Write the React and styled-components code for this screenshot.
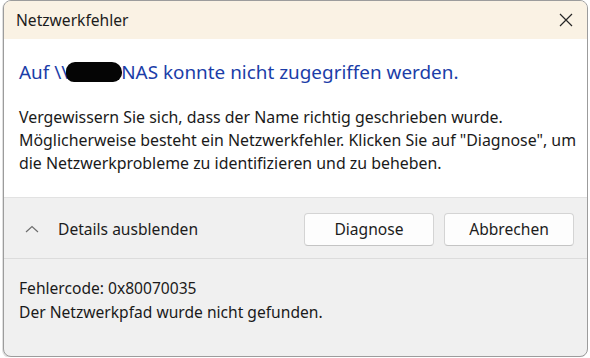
import React from "react";
import styled, { createGlobalStyle } from "styled-components";

const Global = createGlobalStyle`
  html, body {
    margin: 0;
    padding: 0;
    background: #ffffff;
  }
  body {
    font-family: "Segoe UI", "Noto Sans", "Open Sans", sans-serif;
  }
`;

const Dialog = styled.div`
  box-sizing: border-box;
  width: 585px;
  height: 357px;
  margin-left: 3px;
  display: flex;
  flex-direction: column;
  border: 1px solid #9c9c9c;
  border-radius: 8px;
  box-shadow: -1px 1px 0 0 rgba(0, 0, 0, 0.12);
  overflow: hidden;
  background: #f0f0f0;
`;

const TitleBar = styled.div`
  height: 37px;
  display: flex;
  align-items: center;
  justify-content: space-between;
  padding: 0 11px 1px 12px;
  background: #faf2e4;
`;

const Title = styled.div`
  color: #1c1c1c;
  font-size: 15.6px;
`;

const Close = styled.button`
  width: 20px;
  height: 20px;
  padding: 0;
  border: none;
  background: none;
  display: flex;
  align-items: center;
  justify-content: center;
`;

const Main = styled.div`
  height: 159px;
  box-sizing: border-box;
  background: #ffffff;
  padding: 17px 15px 0 15px;
  border-bottom: 1px solid #e2e2e2;
`;

const Heading = styled.div`
  color: #1b3da8;
  font-size: 18.9px;
  line-height: 32px;
  white-space: nowrap;
`;

const Redacted = styled.span`
  display: inline-block;
  width: 56px;
  height: 20px;
  margin: 0 -1px 0 -2px;
  vertical-align: -3px;
  background: #050505;
  border-radius: 9px 10px 9px 8px;
`;

const Body = styled.p`
  margin: 18px 0 0 0;
  color: #1a1a1a;
  font-size: 15.9px;
  line-height: 23px;
  white-space: nowrap;
`;

const Footer = styled.div`
  height: 61px;
  box-sizing: border-box;
  display: flex;
  align-items: center;
  padding: 2px 13px 0 20px;
  border-bottom: 1px solid #dcdcdc;
`;

const Toggle = styled.div`
  display: flex;
  align-items: center;
  gap: 18px;
  color: #1c1c1c;
  font-size: 15.6px;
  flex-grow: 1;
`;

const Buttons = styled.div`
  display: flex;
  gap: 10px;
`;

const Button = styled.button`
  width: 130px;
  height: 33px;
  box-sizing: border-box;
  background: #fdfdfd;
  border: 1px solid #d4d4d4;
  border-bottom-color: #c4c4c4;
  border-radius: 4px;
  color: #1c1c1c;
  font-family: inherit;
  font-size: 15.6px;
`;

const Details = styled.div`
  flex-grow: 1;
  padding: 17px 15px 0 15px;
  color: #1a1a1a;
  font-size: 15.6px;
  line-height: 24px;
`;

export default function App() {
  return (
    <>
      <Global />
      <Dialog>
        <TitleBar>
          <Title>Netzwerkfehler</Title>
          <Close aria-label="Schließen">
            <svg width="14" height="14" viewBox="0 0 14 14">
              <path d="M1 1L13 13M13 1L1 13" stroke="#262626" strokeWidth="1.2" fill="none" />
            </svg>
          </Close>
        </TitleBar>
        <Main>
          <Heading>
            Auf \\<Redacted />NAS konnte nicht zugegriffen werden.
          </Heading>
          <Body>
            Vergewissern Sie sich, dass der Name richtig geschrieben wurde.
            <br />
            Möglicherweise besteht ein Netzwerkfehler. Klicken Sie auf "Diagnose", um
            <br />
            die Netzwerkprobleme zu identifizieren und zu beheben.
          </Body>
        </Main>
        <Footer>
          <Toggle>
            <svg width="16" height="10" viewBox="0 0 16 10">
              <path d="M2 8L8 2.5L14 8" stroke="#6e6e6e" strokeWidth="1.2" fill="none" />
            </svg>
            Details ausblenden
          </Toggle>
          <Buttons>
            <Button>Diagnose</Button>
            <Button>Abbrechen</Button>
          </Buttons>
        </Footer>
        <Details>
          Fehlercode: 0x80070035
          <br />
          Der Netzwerkpfad wurde nicht gefunden.
        </Details>
      </Dialog>
    </>
  );
}
